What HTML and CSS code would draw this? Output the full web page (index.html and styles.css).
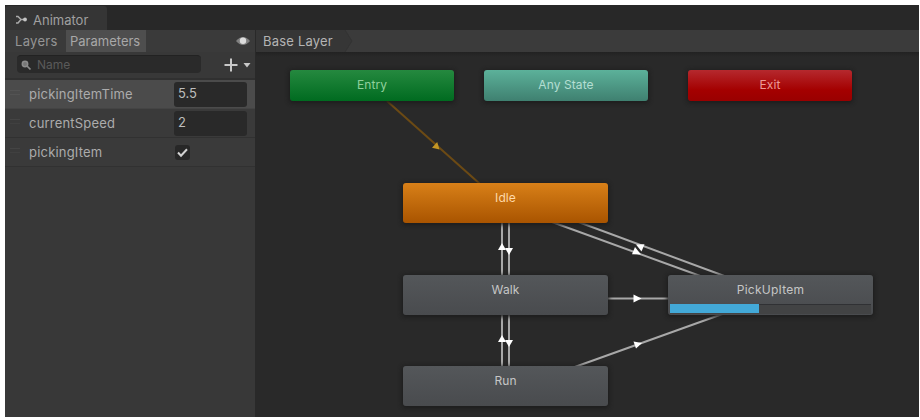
FILE: index.html
```
<!DOCTYPE html>
<html lang="en">
<head>
<meta charset="utf-8">
<title>Animator</title>
<link rel="stylesheet" href="styles.css">
</head>
<body>
<div class="window">
  <header class="tabbar">
    <div class="tab">
      <svg width="13" height="10" viewBox="0 0 13 10"><path d="M1 1.500h2l3 3-3 3.500H1M6 4.500h4" fill="none" stroke="#aaa" stroke-width="1.500"/><circle cx="10" cy="4.500" r="1.900" fill="#c4c4c4"/></svg>
      <span class="tab-name">Animator</span>
    </div>
  </header>
  <div class="main">
    <aside class="panel">
      <nav class="modes">
        <span class="mode mode-layers">Layers</span>
        <span class="mode mode-active">Parameters</span>
        <svg class="eye" width="16" height="12" viewBox="0 0 16 12"><path d="M1 6Q8-2 15 6Q8 14 1 6Z" fill="#808080"/><circle cx="8" cy="5.800" r="3.200" fill="#dcdcdc"/></svg>
      </nav>
      <div class="search-row">
        <div class="search">
          <svg width="12" height="12" viewBox="0 0 12 12"><circle cx="5" cy="5" r="2.700" fill="#777" stroke="#8c8c8c" stroke-width="1.500"/><path d="M7 7l3.500 3.500" stroke="#8c8c8c" stroke-width="1.700"/></svg>
          <span>Name</span>
        </div>
        <svg class="add" width="29" height="16" viewBox="0 0 29 16"><path d="M8 1.500v13M1.500 8h13" stroke="#c8c8c8" stroke-width="2"/><path d="M20.500 6h7l-3.500 4.500z" fill="#c8c8c8"/></svg>
      </div>
      <div class="params">
        <div class="param selected"><i class="grip"></i><span class="pname">pickingItemTime</span><span class="field">5.5</span></div>
        <div class="param"><i class="grip"></i><span class="pname">currentSpeed</span><span class="field">2</span></div>
        <div class="param"><i class="grip"></i><span class="pname">pickingItem</span><span class="check"><svg width="13" height="13" viewBox="0 0 13 13"><path d="M2 6.500l3 3.200 6-6.500" fill="none" stroke="#d2d2d2" stroke-width="2"/></svg></span></div>
      </div>
    </aside>
    <section class="graph">
      <div class="crumbs"><span class="crumb">Base Layer</span><svg width="12" height="22" viewBox="0 0 12 22"><path d="M0 0h1l7 11-7 11H0z" fill="#363636"/><path d="M1 0l7 11-7 11" fill="none" stroke="#333"/></svg></div>
      <div class="canvas">
        <svg class="edges" width="663" height="365" viewBox="256 52 663 365">
          <path class="default-edge" d="M387 101L480 184"/>
          <path class="default-arrow" d="M439.500 149.500l-7.500-1.800 5.200-5.700z"/>
          <g class="edge">
            <path d="M502 222V276M509 222V276M502 314V367M509 314V367"/>
            <path d="M552 222L703 277M573 220L727 277M607 298.500H670M572 368L728 312"/>
          </g>
          <g class="arrow">
            <path d="M498 250h8l-4-7z"/><path d="M505 248h8l-4 7z"/>
            <path d="M498 342h8l-4-7z"/><path d="M505 340h8l-4 7z"/>
            <path d="M641 254.500l-9-.2 3-7.300z"/><path d="M636 244.500l8.500-.2-3 7.200z"/>
            <path d="M641.500 298.500l-8 4v-8z"/><path d="M642 343l-6 5.500-2.500-7z"/>
          </g>
        </svg>
        <div class="node special entry">Entry</div>
        <div class="node special any">Any State</div>
        <div class="node special exit">Exit</div>
        <div class="node idle">Idle</div>
        <div class="node walk">Walk</div>
        <div class="node run">Run</div>
        <div class="node pickup">PickUpItem<div class="progress"><div class="progress-fill"></div></div></div>
      </div>
    </section>
  </div>
</div>
</body>
</html>
```
FILE: styles.css
```
* { box-sizing: border-box; }
body {
  margin: 0;
  width: 920px;
  height: 420px;
  padding: 5px 1px 3px 5px;
  background: #fff;
  overflow: hidden;
  font: 12px/16px Inter, "Liberation Sans", sans-serif;
  color: #b4b4b4;
}
svg { display: block; flex: none; }
.window { height: 412px; display: flex; flex-direction: column; background: #292929; overflow: hidden; }
.tabbar { height: 25px; background: #282828; display: flex; align-items: flex-end; flex: none; }
.tab { width: 102px; height: 24px; padding: 7px 0 0 10px; display: flex; gap: 5px; background: #353535; border-radius: 3px 3px 0 0; }
.tab svg { margin-top: 2px; }
.tab-name { font-size: 13px; line-height: 14px; color: #a0a0a0; }
.main { flex: 1; display: flex; min-height: 0; }
.panel { width: 250px; background: #383838; flex: none; }
.modes { height: 22px; display: flex; align-items: stretch; background: #3a3a3a; line-height: 23px; font-size: 13px; color: #959595; }
.mode-layers { width: 61px; padding-left: 10px; letter-spacing: 0.3px; }
.mode-active { width: 80px; padding-left: 4px; background: #4e4e4e; color: #a8a8a8; }
.eye { margin: 5px 4px 0 auto; }
.search-row { height: 26px; padding: 3px 3px 0 12px; display: flex; justify-content: space-between; }
.search { width: 184px; height: 18px; padding-left: 3px; display: flex; align-items: center; gap: 5px; border-radius: 4px; background: #2a2a2a; color: #5a5a5a; border-top: 1px solid #222; }
.add { margin-top: 2px; }
.params { border-top: 2px solid #303030; }
.param { height: 29px; display: flex; align-items: center; border-bottom: 1px solid #313131; background: #3a3a3a; }
.param.selected { background: #4b4b4b; border-bottom-color: #444; }
.grip { width: 10px; height: 5px; margin: 0 8px 3px 5px; border-top: 1px solid #444; border-bottom: 1px solid #404040; flex: none; }
.selected .grip { border-color: #535353; }
.pname { width: 146px; padding-left: 1px; font-size: 13px; letter-spacing: 0.2px; color: #acacac; flex: none; white-space: nowrap; }
.field { width: 73px; height: 25px; padding: 3px 0 0 4px; background: #292929; border-radius: 3px; font-size: 13px; color: #bdbdbd; }
.check { width: 15px; height: 15px; margin-left: 1px; padding: 1px; background: #272727; border-radius: 3px; }
.graph { flex: 1; margin-left: 1px; min-width: 0; display: flex; flex-direction: column; }
.crumbs { height: 22px; background: #3b3b3b; display: flex; flex: none; line-height: 23px; font-size: 13px; }
.crumb { width: 88px; padding-left: 7px; background: #363636; letter-spacing: 0.2px; white-space: nowrap; }
.canvas {
  position: relative;
  flex: 1;
  background: linear-gradient(#222, #292929 5px);
  overflow: hidden;
}
.edges { position: absolute; left: 0; top: 0; }
.default-edge { stroke: #6c4a14; stroke-width: 2; }
.default-arrow { fill: #c49624; }
.edge { fill: none; stroke: #a8a8a8; stroke-width: 2; }
.arrow { fill: #fff; }
.node {
  position: absolute;
  width: 205px;
  height: 40px;
  padding-top: 7px;
  border-radius: 3px;
  text-align: center;
  letter-spacing: 0.1px;
  color: #c6c6c6;
  background: linear-gradient(#54575a, #494b4e);
  box-shadow: 0 1px 4px 1px #1c1c1c;
}
.special { width: 164px; height: 31px; top: 18px; }
.entry { left: 34px; background: linear-gradient(#25893f, #006b20); color: #8fd09c; }
.any { left: 228px; background: linear-gradient(#5cb19a, #3f8070); color: #b4ded2; }
.exit { left: 432px; background: linear-gradient(#b5292e, #a40000 65%, #990000); color: #ee9a96; }
.idle { left: 147px; top: 131px; background: linear-gradient(#d88018, #a95400); color: #ffd9a8; }
.walk { left: 147px; top: 223px; }
.run { left: 147px; top: 314px; }
.pickup { left: 412px; top: 223px; letter-spacing: 0.25px; }
.progress { position: absolute; left: 2px; right: 2px; bottom: 1px; height: 10px; background: #424344; border-top: 1px solid #303134; }
.progress-fill { width: 89px; height: 9px; margin-top: -1px; background: #43a9d8; }
```
